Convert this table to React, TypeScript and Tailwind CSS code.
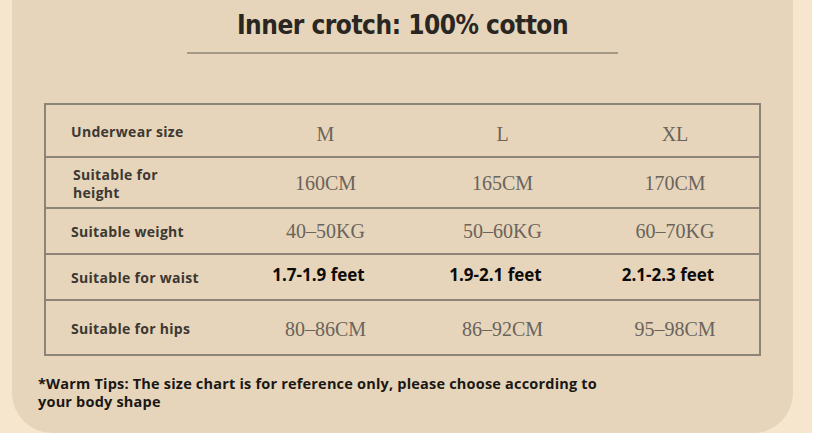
import React from "react";

const serif = { fontFamily: '"Liberation Serif", "DejaVu Serif", serif' };

const rows: { label: string[]; values: string[]; kind: "serif" | "bold"; h: string }[] = [
  { label: ["Underwear size"], values: ["M", "L", "XL"], kind: "serif", h: "h-[53px]" },
  { label: ["Suitable for", "height"], values: ["160CM", "165CM", "170CM"], kind: "serif", h: "h-[51px]" },
  { label: ["Suitable weight"], values: ["40–50KG", "50–60KG", "60–70KG"], kind: "serif", h: "h-[46px]" },
  { label: ["Suitable for waist"], values: ["1.7-1.9 feet", "1.9-2.1 feet", "2.1-2.3 feet"], kind: "bold", h: "h-[46px]" },
  { label: ["Suitable for hips"], values: ["80–86CM", "86–92CM", "95–98CM"], kind: "serif", h: "h-[53px]" },
];

export default function App() {
  return (
    <div className="w-[831px] h-[433px] bg-white flex overflow-hidden" style={{ fontFamily: '"Open Sans", "Noto Sans", sans-serif' }}>
      <div className="w-[812px] h-full bg-[#f6e6cd] pl-[12px] pr-[19px]">
        <div className="h-full bg-[#e6d5ba] rounded-b-[40px] flex flex-col items-center relative">
          <h1
            className="mt-[8px] text-[26px] leading-[34px] font-bold text-[#2a2622] tracking-[-0.5px]"
            style={{ fontFamily: '"DejaVu Sans Condensed", "Liberation Sans Narrow", "Open Sans", sans-serif' }}
          >
            Inner crotch: 100% cotton
          </h1>
          <div className="mt-[10px] w-[431px] h-[2px] bg-[#a59a88]" />
          <div className="mt-[49px] border-2 border-[#8c8477] w-[717px]">
            {rows.map((r, i) => (
              <div
                key={i}
                className={`flex items-center ${r.h} ${i < rows.length - 1 ? "border-b-2 border-[#8c8477]" : ""}`}
              >
                <div className={`w-[191px] pl-[25px] text-[14px] font-bold leading-[18px] text-[#3d3833] tracking-[0.3px] ${i === 0 ? "pt-[3px]" : i === 1 ? "pt-[3px] pl-[27px]" : i === 4 ? "pt-[3px]" : "pt-[1px]"}`}>
                  {r.label.map((l, j) => (
                    <div key={j}>{l}</div>
                  ))}
                </div>
                {r.values.map((v, j) => (
                  <div
                    key={j}
                    className={`${j === 0 ? "w-[177px]" : j === 1 ? "w-[177px]" : "w-[168px]"} text-center`}
                  >
                    {r.kind === "serif" ? (
                      <span className={`text-[20px] text-[#6a645c] inline-block ${i === 0 ? "pt-[6px]" : i === 4 ? "pt-[3px]" : ""}`} style={serif}>
                        {v}
                      </span>
                    ) : (
                      <span className="text-[17px] font-bold text-[#0d0b09] pb-[5px] mr-[14px] inline-block">{v}</span>
                    )}
                  </div>
                ))}
              </div>
            ))}
          </div>
          <div className="self-start mt-[19px] ml-[26px] text-[14.5px] font-bold leading-[18px] text-[#1a1714] tracking-[0.2px]">
            <div>*Warm Tips: The size chart is for reference only, please choose according to</div>
            <div>your body shape</div>
          </div>
        </div>
      </div>
    </div>
  );
}
